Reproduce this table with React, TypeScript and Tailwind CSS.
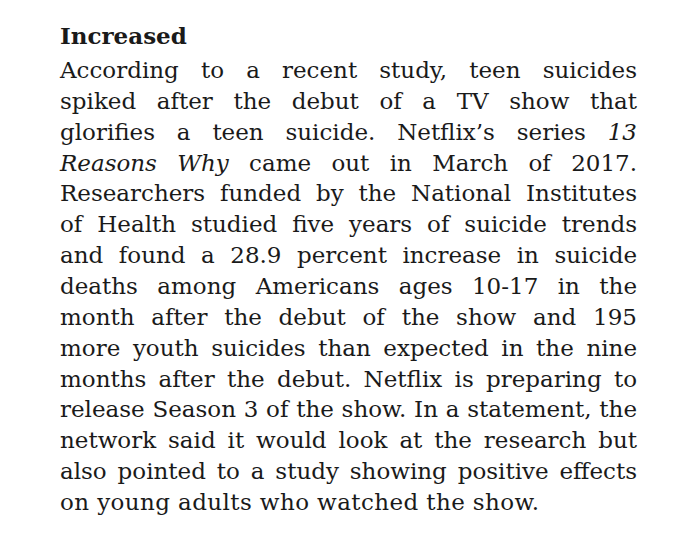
import React from "react";

const lines: React.ReactNode[] = [
  "According to a recent study, teen suicides",
  "spiked after the debut of a TV show that",
  <>glorifies a teen suicide. Netflix’s series <em>13</em></>,
  <><em>Reasons Why</em> came out in March of 2017.</>,
  "Researchers funded by the National Institutes",
  "of Health studied five years of suicide trends",
  "and found a 28.9 percent increase in suicide",
  "deaths among Americans ages 10-17 in the",
  "month after the debut of the show and 195",
  "more youth suicides than expected in the nine",
  "months after the debut. Netflix is preparing to",
  "release Season 3 of the show. In a statement, the",
  "network said it would look at the research but",
  "also pointed to a study showing positive effects",
];

export default function App() {
  return (
    <div className="w-[680px] h-[543px] bg-white text-[#1a1a1a] font-['DejaVu_Serif',serif] text-[23px] pt-[20px] pl-[60px]">
      <div className="w-[577px]">
        <div className="font-bold leading-[31px] mb-[4px]">Increased</div>
        {lines.map((l, i) => (
          <div key={i} className="leading-[30.86px] whitespace-nowrap text-justify [text-align-last:justify]">
            {l}
          </div>
        ))}
        <div className="leading-[30.86px] whitespace-nowrap tracking-[0.4px]">on young adults who watched the show.</div>
      </div>
    </div>
  );
}
